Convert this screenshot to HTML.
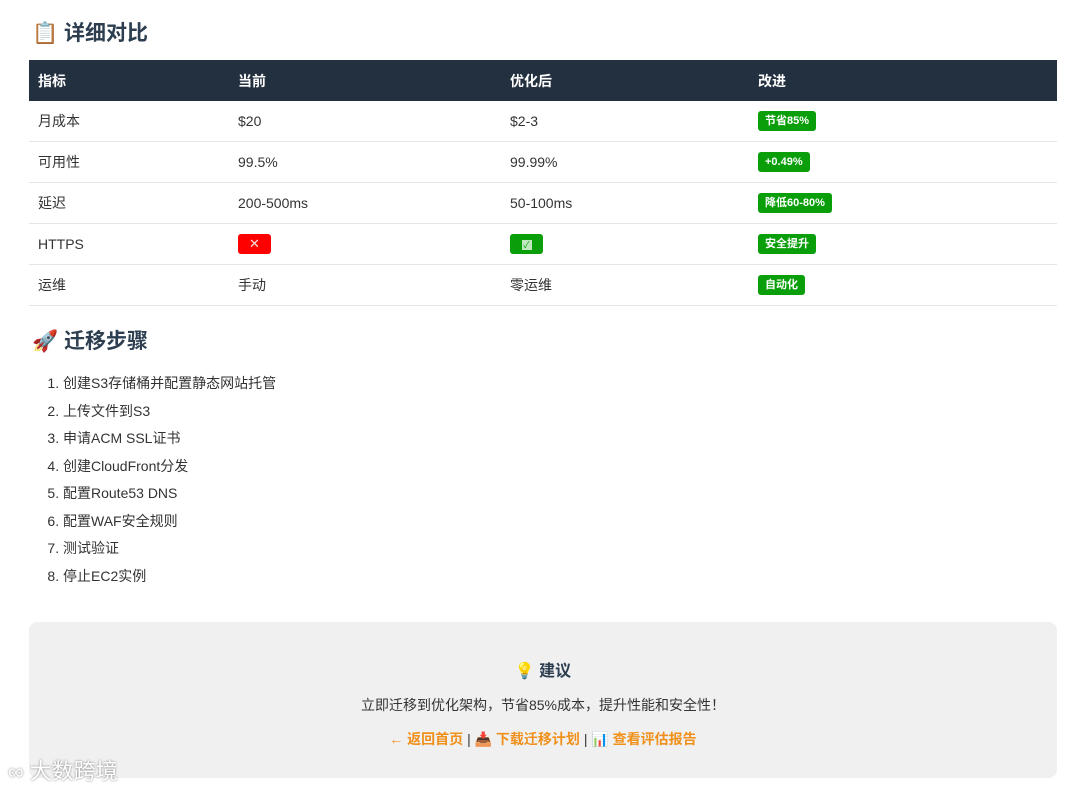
<!DOCTYPE html>
<html><head><meta charset="utf-8"><style>
body{margin:0;background:#fff;font-family:"Liberation Sans","Noto Sans CJK SC",sans-serif;color:#333;}
.wrap{position:relative;width:1080px;height:789px;overflow:hidden}
h2{position:absolute;margin:0;font-size:21px;font-weight:bold;color:#2c3e50;left:32px}
table{position:absolute;left:29px;top:60px;width:1028px;border-collapse:collapse;font-size:14px}
th{background:#233040;color:#fff;text-align:left;height:41px;padding:0 0 0 9px;font-size:14px}
td{padding:0 0 0 9px;border-bottom:1px solid #e5e5e5;height:40px;color:#333}
.b{display:inline-block;background:#0a9f0a;color:#fff;font-size:11px;font-weight:bold;padding:3px 7px;border-radius:3px;line-height:14px}
.x{display:inline-block;background:#f00;width:33px;height:20px;border-radius:3px;color:#fdd;text-align:center;line-height:20px;font-size:13px}
.c{display:inline-block;background:#0a9f0a;width:33px;height:20px;border-radius:3px;text-align:center;line-height:20px}
.c span{display:inline-block;width:10px;height:10px;background:#bfe8bf;color:#0a9f0a;font-size:9px;line-height:10px;vertical-align:middle}
ol{position:absolute;left:23px;top:370px;margin:0;font-size:14px;line-height:27.5px;color:#333}
.box{position:absolute;left:29px;top:622px;width:1028px;height:156px;background:#f0f0f0;border-radius:8px;text-align:center}
.box a{color:#f0901a;font-weight:bold;text-decoration:none}
</style></head><body><div class="wrap">
<h2 style="top:17px">📋 详细对比</h2>
<table>
<tr><th style="width:191px">指标</th><th style="width:263px">当前</th><th style="width:239px">优化后</th><th>改进</th></tr>
<tr><td>月成本</td><td>$20</td><td>$2-3</td><td><span class="b">节省85%</span></td></tr>
<tr><td>可用性</td><td>99.5%</td><td>99.99%</td><td><span class="b">+0.49%</span></td></tr>
<tr><td>延迟</td><td>200-500ms</td><td>50-100ms</td><td><span class="b">降低60-80%</span></td></tr>
<tr><td style="height:38px">HTTPS</td><td><span class="x">✕</span></td><td><span class="c"><span>✓</span></span></td><td><span class="b">安全提升</span></td></tr>
<tr><td>运维</td><td>手动</td><td>零运维</td><td><span class="b">自动化</span></td></tr>
</table>
<h2 style="top:325px">🚀 迁移步骤</h2>
<ol style="padding-left:40px">
<li>创建S3存储桶并配置静态网站托管</li><li>上传文件到S3</li><li>申请ACM SSL证书</li><li>创建CloudFront分发</li><li>配置Route53 DNS</li><li>配置WAF安全规则</li><li>测试验证</li><li>停止EC2实例</li>
</ol>
<div class="box">
<div style="position:absolute;top:35px;width:100%;font-size:16px;font-weight:bold;color:#2c3e50">💡 建议</div>
<div style="position:absolute;top:73px;width:100%;font-size:14px;color:#333">立即迁移到优化架构，节省85%成本，提升性能和安全性！</div>
<div style="position:absolute;top:107px;width:100%;font-size:14px;color:#333"><a>← 返回首页</a> | <a>📥 下载迁移计划</a> | <a>📊 查看评估报告</a></div>
</div>
<div style="position:absolute;left:8px;top:754px;font-size:22px;color:#fff;text-shadow:0 0 2px #777">∞ 大数跨境</div>
</div></body></html>
